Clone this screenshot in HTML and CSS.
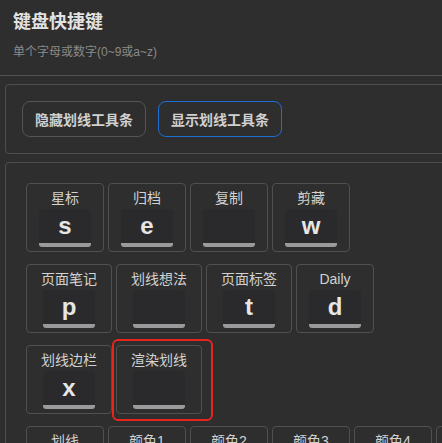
FILE: index.html
```html
<!DOCTYPE html>
<html lang="zh">
<head>
    <meta charset="UTF-8">
    <meta name="viewport" content="width=device-width, initial-scale=1.0">
    <title>键盘快捷键</title>
    <link rel="stylesheet" href="styles.css">
</head>
<body>
    <div class="header">
        <h1>键盘快捷键</h1>
        <p>单个字母或数字(0~9或a~z)</p>
    </div>

    <div class="panel toolbar">
        <button class="btn">隐藏划线工具条</button>
        <button class="btn active">显示划线工具条</button>
    </div>

    <div class="panel keys">
        <div class="row">
            <div class="key"><div class="label">星标</div><div class="cap">s</div></div>
            <div class="key"><div class="label">归档</div><div class="cap">e</div></div>
            <div class="key"><div class="label">复制</div><div class="cap"></div></div>
            <div class="key"><div class="label">剪藏</div><div class="cap">w</div></div>
        </div>
        <div class="row">
            <div class="key"><div class="label">页面笔记</div><div class="cap">p</div></div>
            <div class="key"><div class="label">划线想法</div><div class="cap"></div></div>
            <div class="key"><div class="label">页面标签</div><div class="cap">t</div></div>
            <div class="key"><div class="label">Daily</div><div class="cap">d</div></div>
        </div>
        <div class="row">
            <div class="key"><div class="label">划线边栏</div><div class="cap">x</div></div>
            <div class="key marked">
                <div class="label">渲染划线</div><div class="cap"></div>
                <span class="mark"></span>
            </div>
        </div>
        <div class="row">
            <div class="key"><div class="label">划线</div><div class="cap"></div></div>
            <div class="key"><div class="label">颜色1</div><div class="cap"></div></div>
            <div class="key"><div class="label">颜色2</div><div class="cap"></div></div>
            <div class="key"><div class="label">颜色3</div><div class="cap"></div></div>
            <div class="key"><div class="label">颜色4</div><div class="cap"></div></div>
            <div class="key"><div class="label">颜色5</div><div class="cap"></div></div>
        </div>
    </div>
</body>
</html>
```

FILE: styles.css
```css
* {
box-sizing: border-box;
margin: 0;
padding: 0;
}

body {
background: #2e2e2e;
font-family: "Liberation Sans", "Noto Sans CJK SC", sans-serif;
color: #cfcfcf;
overflow: hidden;
width: 442px;
height: 443px;
}

.header {
padding: 10px 13px 15px;
border-bottom: 1px solid #525252;
}

.header h1 {
font-size: 18px;
line-height: 24px;
font-weight: bold;
color: #e2e2e2;
}

.header p {
margin-top: 10px;
font-size: 12px;
line-height: 16px;
color: #8a8a8a;
}

.panel {
width: 700px;
margin: 8px 0 0 5px;
border: 1px solid #4e4e4e;
border-radius: 4px;
}

.toolbar {
display: flex;
gap: 12px;
padding: 16px;
}

.btn {
height: 36px;
padding: 0 12px;
background: transparent;
border: 1px solid #555;
border-radius: 8px;
color: #d0d0d0;
font-family: inherit;
font-size: 14px;
font-weight: bold;
}

.btn.active {
border-color: #1b6fd6;
}

.keys {
padding: 20px;
}

.row {
display: flex;
gap: 4px;
margin-bottom: 12px;
}

.key {
position: relative;
display: flex;
flex-direction: column;
align-items: center;
height: 69px;
padding: 4px 0 4px;
border: 1px solid #505050;
border-radius: 4px;
}

.label {
padding: 0 14px;
font-size: 14px;
line-height: 21px;
color: #d2d2d2;
white-space: nowrap;
}

.cap {
width: 52px;
height: 38px;
margin: 0 12px;
background: #2a2a2c;
border-bottom: 4px solid #9a9a9a;
border-radius: 4px 4px 3px 3px;
text-align: center;
font-size: 24px;
line-height: 34px;
font-weight: bold;
color: #e6e6e6;
}

.mark {
position: absolute;
top: -7px;
left: -5px;
right: -12px;
bottom: -8px;
border: 2px solid #e8251d;
border-radius: 6px;
}
```
